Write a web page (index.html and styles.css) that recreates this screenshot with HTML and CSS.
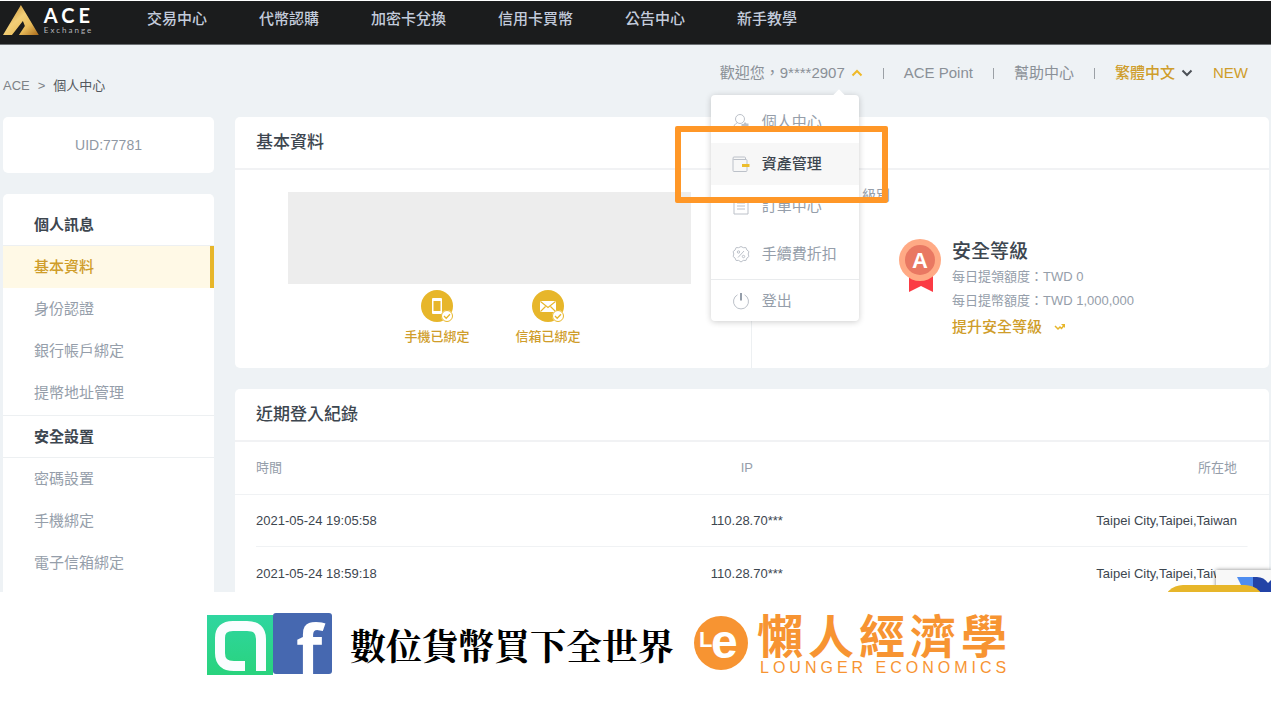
FILE: index.html
```html
<!DOCTYPE html>
<html lang="zh-Hant">
<head>
<meta charset="utf-8">
<meta name="viewport" content="width=device-width, initial-scale=1">
<title>ACE Exchange 個人中心</title>
<link rel="stylesheet" href="styles.css">
</head>
<body>
<div class="app">
  <header class="topbar">
    <a class="brand" href="#">
      <svg class="brand-mark" viewBox="0 0 36 30" aria-hidden="true">
        <defs><linearGradient id="gold" x1="0" y1="0" x2="1" y2="1"><stop offset="0" stop-color="#b97a1d"/><stop offset=".45" stop-color="#f2cf78"/><stop offset=".7" stop-color="#e9bd5c"/><stop offset="1" stop-color="#a9691a"/></linearGradient></defs>
        <path d="M18 0 36 30H16l6-9-2-5L9 30H0Z" fill="url(#gold)"/>
      </svg>
      <span class="brand-text"><span class="brand-name">ACE</span><span class="brand-sub">Exchange</span></span>
    </a>
    <nav class="mainnav">
      <a href="#">交易中心</a><a href="#">代幣認購</a><a href="#">加密卡兌換</a><a href="#">信用卡買幣</a><a href="#">公告中心</a><a href="#">新手教學</a>
    </nav>
  </header>

  <div class="subbar">
    <nav class="crumbs"><a href="#">ACE</a><span>&gt;</span><span class="current">個人中心</span></nav>
    <div class="usernav">
      <div class="user">
        <button class="user-toggle" type="button">歡迎您，9****2907
          <svg class="chev gold" viewBox="0 0 12 8" aria-hidden="true"><path d="M1.500 6.500 6 2l4.500 4.500"/></svg>
        </button>
        <div class="menu">
          <a class="menu-item" href="#">
            <svg viewBox="0 0 18 18" aria-hidden="true"><circle cx="8" cy="6" r="4.500"/><path d="M5.500 9.500C3 11 1.500 12.500 1.500 15.500H9"/><path class="fill" d="m13 9 1.500 1.500h2V13l1 1-1 1v2h-2L13 18l-1.500-1h-2v-2l-1-1 1-1v-2h2Z"/></svg>
            個人中心</a>
          <a class="menu-item selected" href="#">
            <svg viewBox="0 0 18 18" aria-hidden="true"><path d="M1 4v11.500q0 1 1 1h12q1 0 1-1V5.500q0-1-1-1H2Q1 4.500 1 3.200 1 2 2 2h10.500q1 0 1 1v1.500"/><path class="accent" d="M10 10.500H17.500"/></svg>
            資產管理<span class="highlight"></span></a>
          <a class="menu-item" href="#">
            <svg viewBox="0 0 18 18" aria-hidden="true"><path d="M2 2h14v15H2ZM5 6h8M5 9h8M5 12h8"/></svg>
            訂單中心</a>
          <a class="menu-item spaced" href="#">
            <svg viewBox="0 0 18 18" aria-hidden="true"><path d="m9 1.500 2.300 1.200 2.600-.1 1 2.400 2 1.600L16.200 9l.7 2.500-2 1.600-1 2.400-2.600-.1L9 17l-2.300-1.600-2.600.1-1-2.400-2-1.600L1.800 9l-.7-2.400 2-1.600 1-2.400 2.600.1Z"/><path d="m6 12.500 6-6.500"/><circle cx="6.500" cy="7" r="1.200"/><circle cx="11.500" cy="11.500" r="1.200"/></svg>
            手續費折扣</a>
          <a class="menu-item divided" href="#">
            <svg viewBox="0 0 18 18" aria-hidden="true"><path d="M5.500 2.800a7.500 7.500 0 1 0 7 0"/><path class="dark" d="M9 1v7.500"/></svg>
            登出</a>
        </div>
      </div>
      <span class="bar"></span>
      <a href="#">ACE Point</a>
      <span class="bar"></span>
      <a href="#">幫助中心</a>
      <span class="bar"></span>
      <button class="lang" type="button">繁體中文
        <svg class="chev" viewBox="0 0 12 8" aria-hidden="true"><path d="M1.500 1.500 6 6l4.500-4.500"/></svg>
      </button>
      <a class="new" href="#">NEW</a>
    </div>
  </div>

  <div class="columns">
    <aside class="side">
      <div class="card uid">UID:77781</div>
      <nav class="card sidenav">
        <h2>個人訊息</h2>
        <a class="active" href="#">基本資料</a>
        <a href="#">身份認證</a>
        <a href="#">銀行帳戶綁定</a>
        <a href="#">提幣地址管理</a>
        <h2 class="ruled">安全設置</h2>
        <a href="#">密碼設置</a>
        <a href="#">手機綁定</a>
        <a href="#">電子信箱綁定</a>
      </nav>
    </aside>
    <main class="main">
      <section class="card">
        <h1>基本資料</h1>
        <div class="profile">
          <div class="account">
            <div class="redacted"></div>
            <div class="bindings">
              <div class="binding">
                <svg viewBox="0 0 32 32" aria-hidden="true"><circle cx="16" cy="16" r="16" fill="#e7b62a"/><rect x="11" y="8" width="10" height="16" rx="1" fill="#fff"/><rect x="12.500" y="11" width="7" height="10" fill="#e7b62a"/><circle cx="26" cy="26" r="6" fill="#fff"/><circle cx="26" cy="26" r="5.500" fill="none" stroke="#e7b62a"/><path d="m23 26 2.200 2.200 3.800-4" fill="none" stroke="#e7b62a" stroke-width="1.300"/></svg>
                手機已綁定</div>
              <div class="binding">
                <svg viewBox="0 0 32 32" aria-hidden="true"><circle cx="16" cy="16" r="16" fill="#e7b62a"/><rect x="8" y="11" width="16" height="11" rx="1" fill="#fff"/><path d="m8.500 11.500 7.500 6 7.500-6M8.500 21.500l5-5m10 5-5-5" fill="none" stroke="#e7b62a" stroke-width="1.100"/><circle cx="26" cy="26" r="6" fill="#fff"/><circle cx="26" cy="26" r="5.500" fill="none" stroke="#e7b62a"/><path d="m23 26 2.200 2.200 3.800-4" fill="none" stroke="#e7b62a" stroke-width="1.300"/></svg>
                信箱已綁定</div>
            </div>
          </div>
          <div class="security">
            <div class="tier">級別</div>
            <div class="level">
              <svg class="medal" viewBox="0 0 42 54" aria-hidden="true"><path d="M10 34h24v19l-12-6-12 6Z" fill="#fb3b44"/><circle cx="21" cy="21" r="21" fill="#ffaa85"/><circle cx="21" cy="21" r="15" fill="#e97862"/><text x="21" y="29" text-anchor="middle">A</text></svg>
              <div>
                <h3>安全等級</h3>
                <p>每日提領額度：TWD 0</p>
                <p>每日提幣額度：TWD 1,000,000</p>
                <a class="upgrade" href="#">提升安全等級
                  <svg viewBox="0 0 12 8" aria-hidden="true"><path d="m1 3 3 3 2-2 1.500 1.500L10 2.500" fill="none" stroke="#e7b62a" stroke-width="1.500"/><path d="M7 1h4v4Z" fill="#e7b62a"/></svg></a>
              </div>
            </div>
          </div>
        </div>
      </section>

      <section class="card records">
        <h1>近期登入紀錄</h1>
        <table>
          <thead><tr><th>時間</th><th>IP</th><th>所在地</th></tr></thead>
          <tbody>
            <tr><td>2021-05-24 19:05:58</td><td>110.28.70***</td><td>Taipei City,Taipei,Taiwan</td></tr>
            <tr><td>2021-05-24 18:59:18</td><td>110.28.70***</td><td>Taipei City,Taipei,Taiwan</td></tr>
          </tbody>
        </table>
      </section>
    </main>
  </div>
  <div class="captcha">
    <svg viewBox="0 0 34 16" aria-hidden="true"><path d="M0 0h17v16H0l4-8Z" fill="#4f8df0"/><path d="M16 0h4q7 0 11 6l3-3v13H20l-4-6Z" fill="#2343a6"/></svg>
  </div>
  <div class="chat"></div>
</div>

<footer class="promo">
  <div class="badges">
    <svg class="amazing" viewBox="0 0 66 60" aria-hidden="true"><defs><linearGradient id="mint" x1="0" y1="0" x2="0" y2="1"><stop offset="0" stop-color="#2fd6a0"/><stop offset="1" stop-color="#29d37d"/></linearGradient></defs><rect width="66" height="60" fill="url(#mint)"/><path d="M38 51H27Q13 51 13 38V23Q13 11 26 11H40Q54 11 54 24V56" fill="none" stroke="#fafdff" stroke-width="10"/></svg>
    <svg class="fb" viewBox="0 0 59 61" aria-hidden="true"><rect width="59" height="61" rx="3" fill="#4668b0"/><text x="23" y="61">f</text></svg>
  </div>
  <p class="slogan">數位貨幣買下全世界</p>
  <div class="lounger">
    <svg viewBox="0 0 54 54" aria-hidden="true"><circle cx="27" cy="27" r="27" fill="#f79432"/><text class="mark-l" x="5" y="31">L</text><text class="mark-e" x="17" y="42">e</text></svg>
    <div class="lounger-text"><span class="lounger-zh">懶人經濟學</span><span class="lounger-en">LOUNGER ECONOMICS</span></div>
  </div>
</footer>
</body>
</html>
```
FILE: styles.css
```css
* { box-sizing: border-box; }
body {
  margin: 0;
  background: #fff;
  color: #3d464f;
  font: 15px/22px "Liberation Sans", "Noto Sans CJK TC", sans-serif;
}
a { color: inherit; text-decoration: none; }
h1, h2, h3, p { margin: 0; }
button { padding: 0; border: 0; background: none; color: inherit; font: inherit; }

.app {
  position: relative;
  overflow: hidden;
  margin: 1px 3px 0 0;
  background: #eef2f5;
}

/* top bar */
.topbar {
  display: flex;
  gap: 53px;
  height: 44px;
  padding: 4px 3px;
  background: #1b1c1d;
  border-bottom: 1px solid #6c7073;
}
.brand { display: flex; gap: 5px; width: 91px; color: #fff; }
.brand-mark { width: 36px; height: 30px; }
.brand-text { display: flex; flex-direction: column; }
.brand-name { font: bold 20px/20px Lato, sans-serif; letter-spacing: 4px; }
.brand-sub { font: 8px/10px Lato, sans-serif; letter-spacing: 2px; color: #b5b7ba; }
.mainnav { display: flex; gap: 52px; padding-top: 3px; color: #c3cbdb; font-weight: 500; white-space: nowrap; }

/* breadcrumb and user navigation */
.subbar { display: flex; justify-content: space-between; height: 72px; padding: 17px 23px 0 3px; }
.crumbs { display: flex; gap: 8px; padding-top: 13px; font-size: 13px; color: #7d8287; }
.crumbs .current { color: #55595e; }
.usernav { display: flex; align-items: flex-start; color: #8a9097; white-space: nowrap; }
.user { position: relative; }
.user-toggle, .lang { display: flex; align-items: center; gap: 6px; }
.chev { width: 12px; height: 8px; fill: none; stroke: #4c5157; stroke-width: 2; }
.chev.gold { stroke: #efb928; }
.bar { width: 1px; height: 11px; margin: 6px 20px 0; background: #9ba0a6; }
.lang { color: #cf9d2a; font-weight: 500; }
.usernav .new { margin-left: 20px; color: #cf9d2a; }

.menu {
  position: absolute;
  z-index: 5;
  top: 33px;
  right: 4px;
  width: 148px;
  padding-top: 6px;
  border-radius: 4px;
  background: #fff;
  box-shadow: 0 1px 6px rgba(0, 0, 0, .2);
}
.menu::before {
  content: "";
  position: absolute;
  top: -4px;
  right: 16px;
  width: 8px;
  height: 8px;
  background: #fff;
  transform: rotate(45deg);
}
.menu-item {
  position: relative;
  display: flex;
  align-items: center;
  gap: 12px;
  height: 42px;
  padding-left: 21px;
  color: #959eaa;
}
.menu-item svg { width: 18px; height: 18px; fill: none; stroke: #bcc1c9; stroke-width: 1; }
.menu-item svg .fill { fill: #bcc1c9; stroke: none; }
.menu-item svg .accent { stroke: #ecbd2d; stroke-width: 3; }
.menu-item svg .dark { stroke: #959eaa; stroke-width: 2; }
.menu-item.selected { z-index: 1; background: #f7f7f7; color: #3d464f; font-weight: 500; }
.menu-item.spaced { margin: 6px 0 4px; }
.menu-item.divided { border-top: 1px solid #e9ebed; }
.highlight {
  position: absolute;
  inset: -17px -29px -18px -36px;
  border: 6px solid #ff9727;
  border-radius: 2px;
}

/* page body */
.columns { display: grid; grid-template-columns: 211px minmax(0, 1fr); gap: 21px; padding: 0 2px 0 3px; }
.card { border-radius: 5px; background: #fff; }
.side, .main { display: flex; flex-direction: column; gap: 21px; }
.uid { padding: 17px 0; text-align: center; color: #8f98a4; font-size: 14px; }
.sidenav { flex: 1; padding: 10px 0 4px; border-radius: 5px 5px 0 0; }
.sidenav h2, .sidenav a { display: block; padding: 10px 31px; font-size: 15px; line-height: 22px; }
.sidenav h2 { border-bottom: 1px solid #edf0f2; font-weight: 700; padding-bottom: 9px; }
.sidenav h2.ruled { margin-top: 1px; border-top: 1px solid #edf0f2; }
.sidenav a { color: #959eaa; }
.sidenav a.active { border-right: 4px solid #e7b62a; background: #fff9e6; color: #cf9d2a; font-weight: 500; }

.card h1 { padding: 14px 21px 13px; border-bottom: 2px solid #f1f2f4; font-size: 17px; line-height: 24px; font-weight: 500; }
.profile { display: grid; grid-template-columns: 1fr 1fr; }
.account { padding: 22px 60px 20px 53px; border-right: 1px solid #edf0f2; }
.redacted { max-width: 403px; height: 92px; background: #ededed; }
.bindings { display: flex; justify-content: center; gap: 46px; padding: 6px 0 0 6px; }
.binding { display: flex; flex-direction: column; align-items: center; gap: 4px; color: #cf9d2a; font-size: 13px; font-weight: 500; line-height: 22px; }
.binding svg { width: 32px; height: 32px; }
.security { padding: 14px 0 0 110px; color: #959eaa; }
.tier { font-size: 14px; }
.level { display: flex; gap: 11px; padding: 33px 0 0 37px; }
.medal { width: 42px; height: 54px; }
.medal text { fill: #fff; font: bold 22px "Liberation Sans", sans-serif; }
.level h3 { color: #3d464f; font-size: 19px; line-height: 26px; font-weight: 500; }
.level p { font-size: 13px; line-height: 24px; }
.upgrade { display: flex; align-items: center; gap: 12px; padding-top: 3px; color: #cf9d2a; font-weight: 500; }
.upgrade svg { width: 12px; height: 8px; }

.records { border-radius: 5px 5px 0 0; padding-bottom: 1px; }
table { width: 100%; border-collapse: collapse; table-layout: fixed; font-size: 13px; line-height: 20px; }
th, td { height: 53px; padding: 0; text-align: center; }
th { height: 52px; color: #959eaa; font-weight: 400; }
thead tr { border-bottom: 1px solid #f0f2f4; }
tbody tr { background: linear-gradient(#f0f2f4, #f0f2f4) center bottom / calc(100% - 42px) 1px no-repeat; }
tbody tr:last-child { background: none; }
th:first-child, td:first-child { padding-left: 21px; text-align: left; }
th:last-child, td:last-child { width: 34%; padding-right: 32px; text-align: right; }
tbody tr:last-child td { height: 44px; padding-top: 10px; }

.captcha {
  position: absolute;
  right: 0;
  bottom: 0;
  width: 55px;
  height: 22px;
  padding: 7px 0 0 21px;
  background: #f8f8f8;
  box-shadow: 0 0 4px rgba(0, 0, 0, .5);
}
.captcha svg { display: block; width: 34px; height: 16px; }
.chat { position: absolute; right: 6px; bottom: -33px; width: 102px; height: 40px; border-radius: 20px; background: #e7b62a; }

/* promotional strip */
.promo { display: flex; align-items: flex-start; padding: 21px 0 0 207px; white-space: nowrap; }
.badges { display: flex; }
.amazing { width: 66px; height: 60px; margin-top: 2px; }
.fb { width: 59px; height: 61px; overflow: visible; }
.fb text { fill: #fff; font: bold 68px "Open Sans", sans-serif; }
.slogan { margin: 9px 20px 0 18px; color: #000; font: 700 36px/52px "Liberation Serif", "Noto Serif CJK TC", serif; }
.lounger { display: flex; gap: 9px; color: #f79432; }
.lounger svg { width: 54px; height: 54px; margin-top: 3px; }
.lounger text { fill: #fff; font-family: "Liberation Sans", sans-serif; font-weight: bold; }
.lounger .mark-l { font-size: 22px; }
.lounger .mark-e { font-size: 48px; }
.lounger-text { display: flex; flex-direction: column; gap: 6px; }
.lounger-zh { font: 700 46px/40px "Noto Sans CJK TC", sans-serif; letter-spacing: 5px; }
.lounger-en { padding-left: 3px; font-size: 16px; line-height: 18px; letter-spacing: 4px; }
```
